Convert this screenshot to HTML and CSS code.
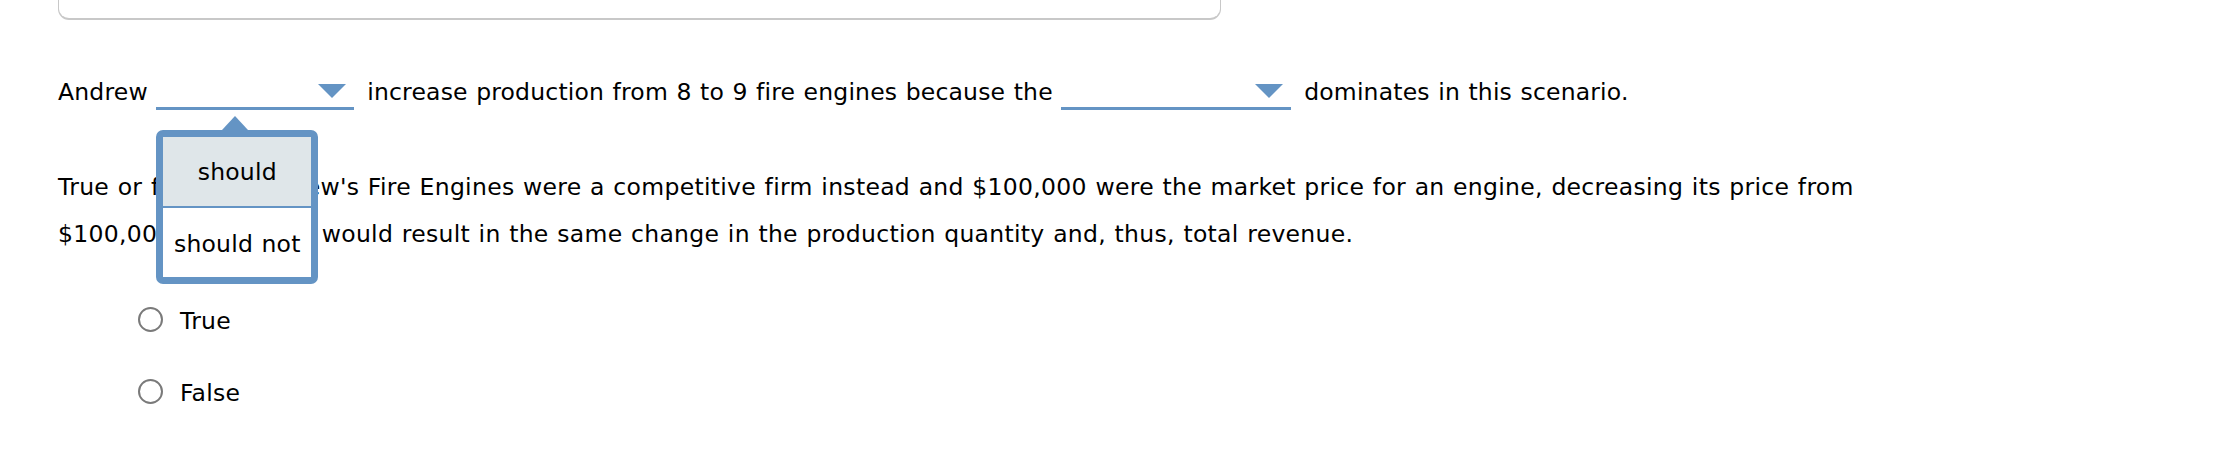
FILE: index.html
```html
<!DOCTYPE html>
<html lang="en">
<head>
<meta charset="utf-8">
<title>Question</title>
<link rel="stylesheet" href="styles.css">
</head>
<body>
<div class="card"></div>
<div class="question">
  <p class="line line-first">Andrew <span class="select select-a"><svg class="caret" width="28" height="14" viewBox="0 0 28 14"><polygon points="0,0 28,0 14,14"/></svg><span class="menu"><svg class="menu-tip" width="26" height="14" viewBox="0 0 26 14"><polygon points="0,14 13,0 26,14"/></svg><span class="opt opt-hover">should</span><span class="opt opt-last">should not</span></span></span> increase production from 8 to 9 fire engines because the <span class="select select-b"><svg class="caret" width="28" height="14" viewBox="0 0 28 14"><polygon points="0,0 28,0 14,14"/></svg></span> dominates in this scenario.</p>
  <p class="line line-body">True or false: If Andrew's Fire Engines were a competitive firm instead and $100,000 were the market price for an engine, decreasing its price from<br>$100,000 to $90,000 would result in the same change in the production quantity and, thus, total revenue.</p>
  <div class="choices">
    <label class="choice"><span class="radio"></span><span>True</span></label>
    <label class="choice"><span class="radio"></span><span>False</span></label>
  </div>
</div>
</body>
</html>
```
FILE: styles.css
```css
html, body {
  margin: 0;
  padding: 0;
  background: #ffffff;
}
body {
  font-family: "DejaVu Sans", Verdana, sans-serif;
  font-size: 23.5px;
  letter-spacing: 0.25px;
  word-spacing: 0.8px;
  color: #000000;
}
.card {
  margin-left: 58px;
  width: 1163px;
  height: 20px;
  box-sizing: border-box;
  border: 1px solid #c8c8c8;
  border-top: none;
  border-bottom-width: 2px;
  border-radius: 0 0 11px 11px;
}
.question {
  padding-left: 58px;
}
.line {
  margin: 0;
  line-height: 47px;
  white-space: nowrap;
}
.line-first {
  margin-top: 49px;
  letter-spacing: 0.18px;
}
.line-body {
  margin-top: 48px;
  letter-spacing: 0.3px;
}
.select {
  position: relative;
  display: inline-block;
  box-sizing: border-box;
  height: 26px;
  padding-right: 8px;
  border-bottom: 3px solid #6494c4;
  vertical-align: -10px;
  margin: 0 4.5px 0 0;
}
.select-a {
  width: 198px;
}
.select-b {
  width: 230px;
}
.caret {
  display: block;
  float: right;
  fill: #6494c4;
}
.menu {
  position: absolute;
  z-index: 2;
  left: 0;
  top: 46px;
  width: 162px;
  box-sizing: border-box;
  border: 7px solid #6494c4;
  border-radius: 7px;
  display: flex;
  flex-direction: column;
  background: #ffffff;
  letter-spacing: 0.2px;
}
.menu-tip {
  position: absolute;
  top: -21px;
  left: 59px;
  fill: #6494c4;
}
.opt {
  display: block;
  text-align: center;
  line-height: 30px;
  white-space: nowrap;
}
.opt-hover {
  background: #dfe6e9;
  box-sizing: border-box;
  padding-top: 20px;
  border-bottom: 2px solid #6494c4;
  height: 71px;
}
.opt-last {
  height: 69px;
  box-sizing: border-box;
  padding-top: 21px;
}
.choices {
  margin-top: 40px;
  padding-left: 80px;
  display: flex;
  flex-direction: column;
  gap: 25px;
}
.choice {
  display: flex;
  align-items: center;
  height: 47px;
  line-height: 47px;
}
.radio {
  width: 25px;
  height: 25px;
  box-sizing: border-box;
  border: 2px solid #7a7a7a;
  border-radius: 50%;
  margin-right: 17px;
  margin-top: -4px;
}
```
